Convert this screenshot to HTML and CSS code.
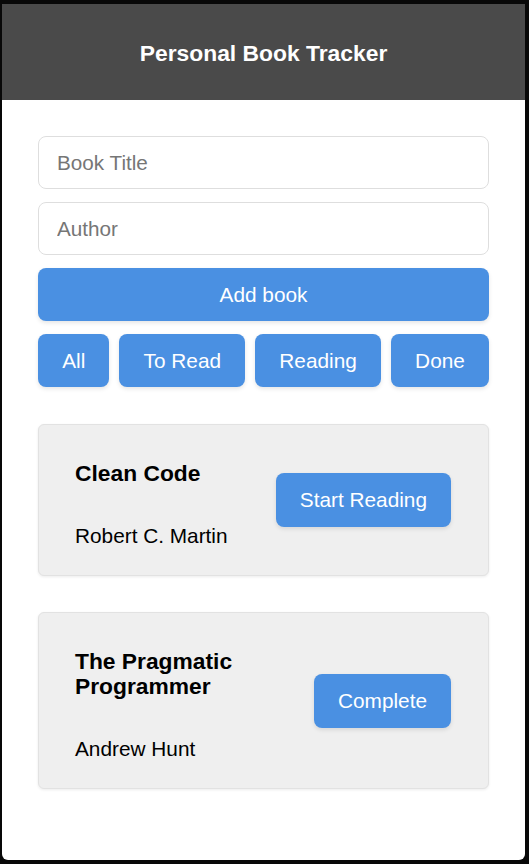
FILE: index.html
```html
<!DOCTYPE html>
<html lang="en">
<head>
<meta charset="utf-8">
<title>Personal Book Tracker</title>
<link rel="stylesheet" href="styles.css">
</head>
<body>
<div class="app">
  <header class="app-header">
    <h1 class="app-title">Personal Book Tracker</h1>
  </header>
  <main class="content">
    <form class="book-form">
      <input class="field" type="text" placeholder="Book Title">
      <input class="field" type="text" placeholder="Author">
      <button class="btn btn-wide" type="button">Add book</button>
    </form>
    <div class="filters">
      <button class="btn filter" type="button">All</button>
      <button class="btn filter" type="button">To Read</button>
      <button class="btn filter" type="button">Reading</button>
      <button class="btn filter" type="button">Done</button>
    </div>
    <ul class="book-list">
      <li class="card">
        <div class="card-info">
          <h3 class="card-title">Clean Code</h3>
          <p class="card-author">Robert C. Martin</p>
        </div>
        <button class="btn card-btn" type="button">Start Reading</button>
      </li>
      <li class="card">
        <div class="card-info">
          <h3 class="card-title">The Pragmatic Programmer</h3>
          <p class="card-author">Andrew Hunt</p>
        </div>
        <button class="btn card-btn" type="button">Complete</button>
      </li>
    </ul>
  </main>
</div>
</body>
</html>
```

FILE: styles.css
```css
* {
  box-sizing: border-box;
}

html, body {
  margin: 0;
  padding: 0;
}

body {
  background: #080808;
  padding: 4px 4px 4px 2px;
  font-family: "Liberation Sans", Arial, sans-serif;
  color: #000;
}

.app {
  width: 523px;
  height: 856px;
  background: #fff;
  border-radius: 0 0 6px 6px;
  overflow: hidden;
}

.app-header {
  height: 96px;
  background: #4a4a4a;
  display: flex;
  align-items: center;
  justify-content: center;
}

.app-title {
  margin: 0;
  padding-top: 1px;
  color: #fff;
  font-size: 22.85px;
  font-weight: bold;
  line-height: 26px;
}

.content {
  padding: 36px 36px;
}

.book-form {
  display: flex;
  flex-direction: column;
  gap: 13px;
}

.field {
  display: block;
  width: 100%;
  height: 53px;
  padding: 0 18px;
  border: 1px solid #dedede;
  border-radius: 8px;
  font-family: "Liberation Sans", Arial, sans-serif;
  font-size: 20.7px;
  color: #000;
  background: #fff;
  outline: none;
}

.field::placeholder {
  color: #767676;
}

.btn {
  height: 53px;
  border: none;
  border-radius: 8px;
  background: #4a90e2;
  color: #fff;
  font-family: "Liberation Sans", Arial, sans-serif;
  font-size: 20.8px;
  box-shadow: 0 2px 4px rgba(0, 0, 0, 0.1);
  cursor: pointer;
}

.btn-wide {
  width: 100%;
}

.filters {
  display: flex;
  gap: 10px;
  margin-top: 13px;
}

.filter {
  flex: 1 1 auto;
  padding: 0 12px;
}

.book-list {
  list-style: none;
  margin: 37px 0 0;
  padding: 0;
  display: flex;
  flex-direction: column;
  gap: 36px;
}

.card {
  display: flex;
  align-items: center;
  justify-content: space-between;
  background: #efefef;
  border: 1px solid #e2e2e2;
  border-radius: 6px;
  box-shadow: 0 1px 3px rgba(0, 0, 0, 0.08);
  padding: 36px 37px 28px 36px;
}

.card-title {
  margin: 0 0 38px;
  font-size: 22.8px;
  line-height: 25px;
  font-weight: bold;
}

.card-author {
  margin: 0;
  font-size: 20.8px;
  line-height: 23px;
}

.card-btn {
  flex: none;
  height: 54px;
  padding: 0 24px;
  margin: 0 0 8px 20px;
}
```
